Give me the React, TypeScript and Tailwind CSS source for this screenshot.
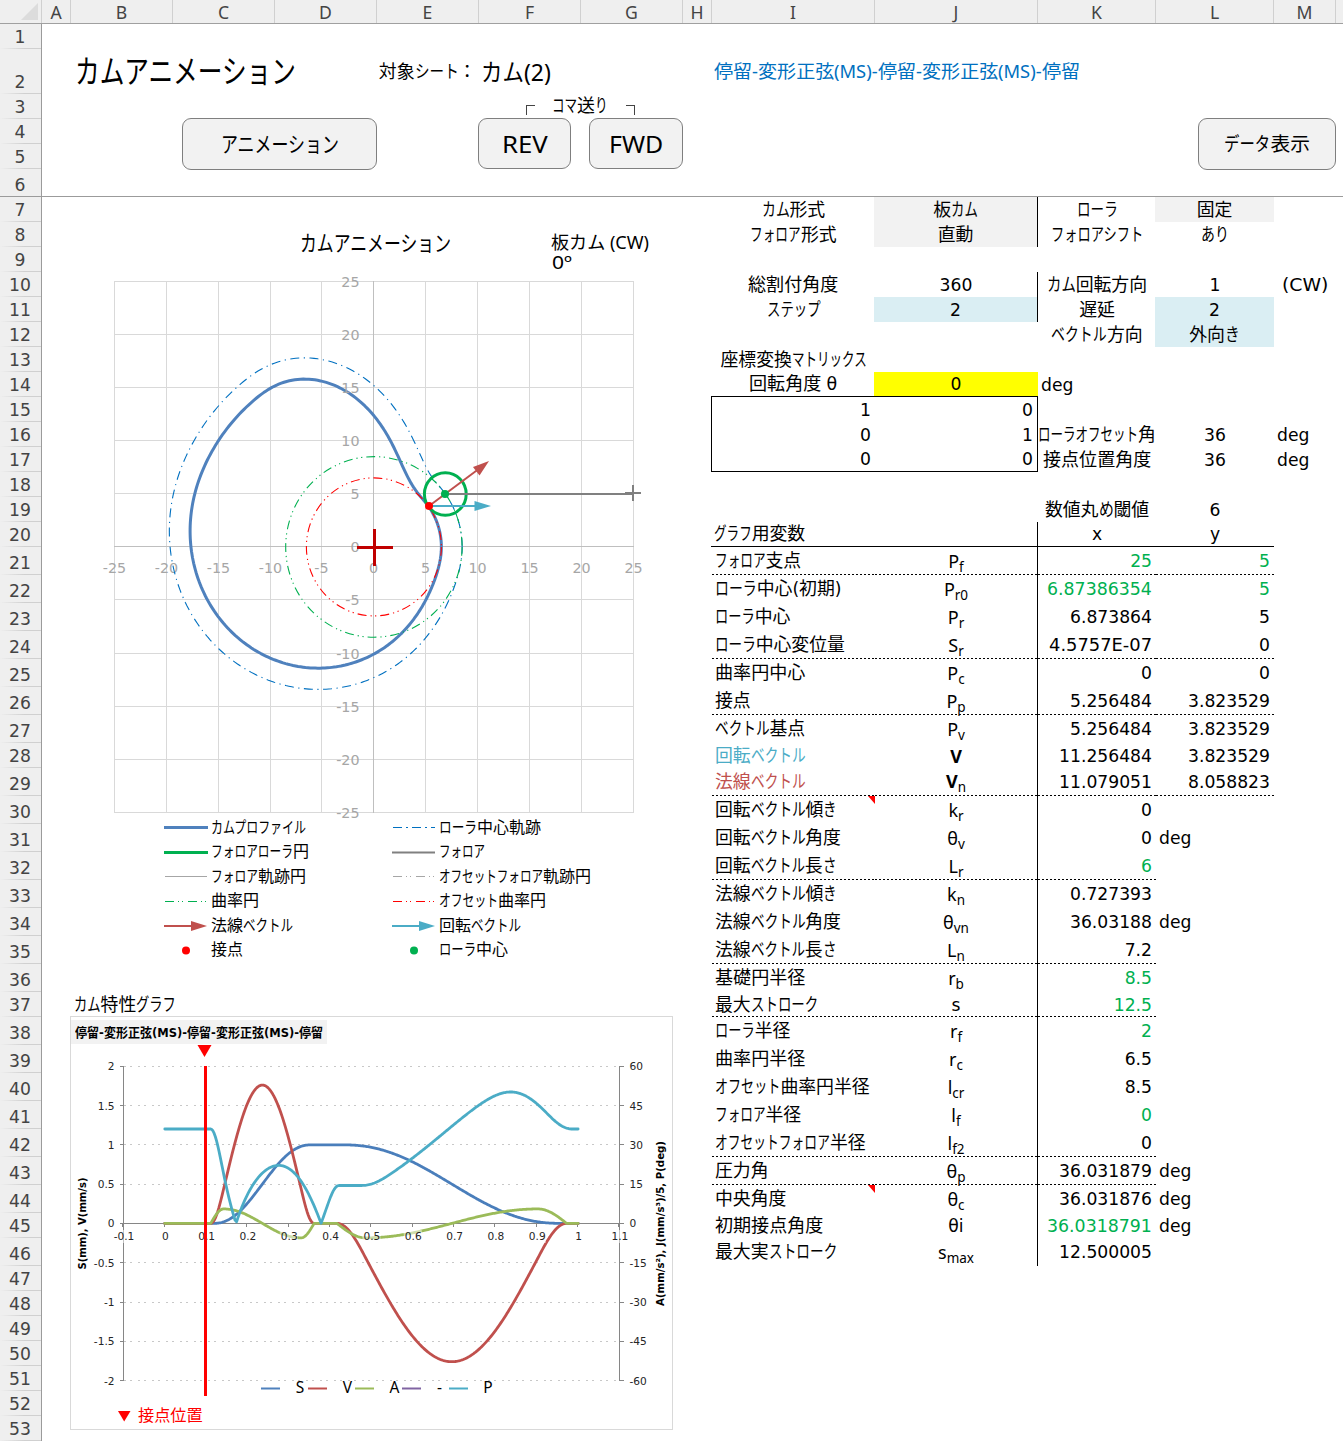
import { useLayoutEffect, useRef, type ReactNode } from "react";

/* ---------- text fitting: kana are set narrower than kanji ---------- */

const KANA = /[\u3040-\u30ff]/;
const CJK = /[\u3000-\u9fff\uff00-\uffef]/;

function kind(c: string) {
  return KANA.test(c) ? "kana" : CJK.test(c) ? "kanji" : "latin";
}

function runsOf(text: string) {
  const runs: { k: string; s: string }[] = [];
  for (const c of text) {
    const k = kind(c);
    const last = runs[runs.length - 1];
    if (last && last.k === k) last.s += c;
    else runs.push({ k, s: c });
  }
  return runs;
}

function T({ t, w, className = "" }: { t: string; w?: number; className?: string }) {
  const ref = useRef<HTMLSpanElement>(null);
  useLayoutEffect(() => {
    const parts = Array.from(ref.current!.children) as HTMLElement[];
    const kana = parts.filter((p) => p.dataset.k === "kana");
    const width = (l: HTMLElement[]) => l.reduce((a, p) => a + p.offsetWidth, 0);
    const squeeze = (l: HTMLElement[], s: number) =>
      l.forEach((p) => {
        p.style.transform = `scaleX(${s})`;
        p.style.marginRight = `${(s - 1) * p.offsetWidth}px`;
      });
    const all = width(parts);
    const kw = width(kana);
    if (w === undefined) squeeze(kana, 0.74);
    else if (kana.length) squeeze(kana, (w - (all - kw)) / kw);
    else squeeze(parts, w / all);
  }, [t, w]);
  return (
    <span ref={ref} className={"inline-block shrink-0 whitespace-pre " + className}>
      {runsOf(t).map((r, i) => (
        <span
          key={i}
          data-k={r.k}
          className={"inline-block origin-left " + (r.k === "latin" ? "" : "text-[1.04em]")}
        >
          {r.s}
        </span>
      ))}
    </span>
  );
}

/* ---------- sheet metrics ---------- */

const LIGHT = "font-['Noto_Sans','Noto_Sans_CJK_JP',sans-serif]";

const COLS: [string, number][] = [
  ["A", 29], ["B", 102], ["C", 102], ["D", 102], ["E", 102], ["F", 102], ["G", 102],
  ["H", 29], ["I", 163], ["J", 163], ["K", 118], ["L", 118], ["M", 62],
];

const TALL = new Set([6, 21, 22, 23, 24, 25, 26, 27, 29, 30, 31, 32, 33, 34, 35, 36, 38, 39, 40, 41, 42, 43, 44, 46]);
const rowHeight = (n: number) => (n === 2 ? 45 : TALL.has(n) ? 28 : 25);
const ROWS = Array.from({ length: 53 }, (_, i) => i + 1);

/* ---------- parameter table ---------- */

type Cell = { t?: string; w?: number; n?: ReactNode; c?: string };
type Row = { I?: Cell; J?: Cell; K?: Cell; L?: Cell; M?: Cell; v?: boolean; dot?: "K" | "L"; note?: boolean };

const C = "justify-center";
const R = "justify-end pr-1";
const L = "pl-[3px]";
const G = " text-[#00b050]";
const GREY = " -ml-px bg-[#f2f2f2]";
const SKY = " -ml-px bg-[#daeef3]";

const sym = (a: string, b?: string, bold = false) => (
  <span className={"relative top-px text-[18px] " + LIGHT}>
    <span className={bold ? "font-bold" : ""}>{a}</span>
    {b && <span className="relative top-[4px] text-[13.5px]">{b}</span>}
  </span>
);
const S = (a: string, b?: string, bold = false): Cell => ({ n: sym(a, b, bold), c: C });
const lab = (t: string, w?: number, x = ""): Cell => ({ t, w, c: L + x });
const num = (t: string, w?: number, x = ""): Cell => ({ t, w, c: R + x });
const mid = (t: string, w?: number, x = ""): Cell => ({ t, w, c: C + x });

const TABLE: Record<number, Row> = {
  7: { I: mid("カム形式", 64), J: mid("板カム", 45, GREY), K: mid("ローラ", 41), L: mid("固定", 36, GREY), v: true },
  8: { I: mid("フォロア形式", 87), J: mid("直動", 36, GREY), K: mid("フォロアシフト", 92), L: mid("あり", 28), v: true },
  10: { I: mid("総割付角度", 90), J: mid("360"), K: mid("カム回転方向", 101), L: mid("1"), M: mid("(CW)", 46), v: true },
  11: { I: mid("ステップ", 54), J: mid("2", undefined, SKY), K: mid("遅延", 36), L: mid("2", undefined, SKY), v: true },
  12: { K: mid("ベクトル方向", 92), L: mid("外向き", 51, SKY) },
  13: { I: mid("座標変換マトリックス", 147) },
  14: {
    I: { t: "回転角度 θ", w: 89, c: C + " -ml-px border-b border-black" },
    J: mid("0", undefined, " -ml-px bg-[#ffff00] border-b border-black"),
    K: lab("deg"),
  },
  15: { I: num("1", undefined, " -ml-px border-l border-black"), J: num("0"), v: true },
  16: {
    I: num("0", undefined, " -ml-px border-l border-black"),
    J: num("1"),
    K: mid("ローラオフセット角", 118),
    L: mid("36"),
    M: lab("deg"),
    v: true,
  },
  17: {
    I: num("0", undefined, " -ml-px border-l border-b border-black"),
    J: num("0", undefined, " border-b"),
    K: mid("接点位置角度", 108),
    L: mid("36"),
    M: lab("deg"),
    v: true,
  },
  19: { K: mid("数値丸め閾値", 105), L: mid("6") },
  20: {
    I: lab("グラフ用変数", 92, " -ml-px border-b border-black"),
    J: { c: "border-b" },
    K: mid("x", undefined, " border-b border-black"),
    L: mid("y", undefined, " border-b border-black"),
    v: true,
  },
  21: { I: lab("フォロア支点", 87), J: S("P", "f"), K: num("25", undefined, G), L: num("5", undefined, G), v: true, dot: "L" },
  22: { I: lab("ローラ中心(初期)", 128), J: S("P", "r0"), K: num("6.87386354", 105, G), L: num("5", undefined, G), v: true },
  23: { I: lab("ローラ中心", 76), J: S("P", "r"), K: num("6.873864"), L: num("5"), v: true },
  24: { I: lab("ローラ中心変位量", 130), J: S("S", "r"), K: num("4.5757E-07", 103), L: num("0"), v: true, dot: "L" },
  25: { I: lab("曲率円中心", 90), J: S("P", "c"), K: num("0"), L: num("0"), v: true },
  26: { I: lab("接点", 36), J: S("P", "p"), K: num("5.256484"), L: num("3.823529"), v: true, dot: "L" },
  27: { I: lab("ベクトル基点", 91), J: S("P", "v"), K: num("5.256484"), L: num("3.823529"), v: true },
  28: { I: lab("回転ベクトル", 91, " text-[#4bacc6]"), J: { n: <b className={"text-[18px] " + LIGHT}>V</b>, c: C }, K: num("11.256484"), L: num("3.823529"), v: true },
  29: { I: lab("法線ベクトル", 91, " text-[#c0504d]"), J: { n: <span className="relative -top-px">{sym("V", "n", true)}</span>, c: C }, K: num("11.079051"), L: num("8.058823"), v: true, dot: "L" },
  30: { I: lab("回転ベクトル傾き", 123), J: S("k", "r"), K: num("0"), v: true, note: true },
  31: { I: lab("回転ベクトル角度", 127), J: S("θ", "v"), K: num("0"), L: lab("deg"), v: true },
  32: { I: lab("回転ベクトル長さ", 122), J: S("L", "r"), K: num("6", undefined, G), v: true, dot: "K" },
  33: { I: lab("法線ベクトル傾き", 123), J: S("k", "n"), K: num("0.727393"), v: true },
  34: { I: lab("法線ベクトル角度", 127), J: S("θ", "vn"), K: num("36.03188"), L: lab("deg"), v: true },
  35: { I: lab("法線ベクトル長さ", 122), J: S("L", "n"), K: num("7.2"), v: true, dot: "K" },
  36: { I: lab("基礎円半径", 90), J: S("r", "b"), K: num("8.5", undefined, G), v: true },
  37: { I: lab("最大ストローク", 103), J: { t: "s", c: C }, K: num("12.5", undefined, G), v: true, dot: "K" },
  38: { I: lab("ローラ半径", 76), J: S("r", "f"), K: num("2", undefined, G), v: true },
  39: { I: lab("曲率円半径", 90), J: S("r", "c"), K: num("6.5"), v: true },
  40: { I: lab("オフセット曲率円半径", 154), J: S("l", "cr"), K: num("8.5"), v: true },
  41: { I: lab("フォロア半径", 87), J: S("l", "f"), K: num("0", undefined, G), v: true },
  42: { I: lab("オフセットフォロア半径", 151), J: S("l", "f2"), K: num("0"), v: true, dot: "K" },
  43: { I: lab("圧力角", 54), J: S("θ", "p"), K: num("36.031879"), L: lab("deg"), v: true, dot: "K" },
  44: { I: lab("中央角度", 72), J: S("θ", "c"), K: num("36.031876"), L: lab("deg"), v: true, note: true },
  45: { I: lab("初期接点角度", 108), J: { t: "θi", c: C }, K: num("36.0318791", 105, G), L: lab("deg"), v: true },
  46: { I: lab("最大実ストローク", 122), J: S("s", "max"), K: num("12.500005"), v: true },
};

const DOTS =
  " bg-[repeating-linear-gradient(90deg,#000_0_2px,transparent_2px_4px)] bg-[length:100%_1px] bg-no-repeat bg-bottom";

function TableCell({ cell, extra = "" }: { cell?: Cell; extra?: string }) {
  return (
    <div className={"relative flex items-center " + (cell?.c ?? "") + extra}>
      {cell?.t !== undefined ? <T t={cell.t} w={cell.w} /> : cell?.n}
    </div>
  );
}

function ParameterTable() {
  return (
    <div className="flex w-[631px] flex-col">
      {ROWS.filter((n) => n > 6).map((n) => {
        const r = TABLE[n] ?? {};
        const d = r.dot ? DOTS : "";
        return (
          <div
            key={n}
            className={
              "grid grid-cols-[163px_163px_118px_118px_62px] " +
              (TALL.has(n) ? "h-[28px]" : "h-[25px]")
            }
          >
            <div className="relative grid">
              <TableCell cell={r.I} extra={d} />
              {r.note && (
                <i className="absolute top-0 right-0 h-[8px] w-[7px] bg-[#ff0000] [clip-path:polygon(0_0,100%_0,100%_100%)]" />
              )}
            </div>
            <TableCell cell={r.J} extra={d + (r.v ? " border-r border-r-black border-b-black" : "")} />
            <TableCell cell={r.K} extra={d} />
            <TableCell cell={r.L} extra={r.dot === "L" ? d : ""} />
            <TableCell cell={r.M} />
          </div>
        );
      })}
    </div>
  );
}

/* ---------- modified sine motion ---------- */

const Q = 4 + Math.PI;
function ms(t: number): [number, number, number] {
  const pi = Math.PI;
  const k = pi / Q;
  const am = (4 * pi * pi) / Q;
  if (t < 1 / 8) return [k * t - Math.sin(4 * pi * t) / (4 * Q), k * (1 - Math.cos(4 * pi * t)), am * Math.sin(4 * pi * t)];
  if (t < 7 / 8) {
    const a = (pi * (1 + 4 * t)) / 3;
    return [(2 + pi * t - 2.25 * Math.sin(a)) / Q, k * (1 - 3 * Math.cos(a)), am * Math.sin(a)];
  }
  return [(4 + pi * t - 0.25 * Math.sin(4 * pi * t)) / Q, k * (1 - Math.cos(4 * pi * t)), am * Math.sin(4 * pi * t)];
}

function motion(deg: number, fall = 200): [number, number, number] {
  if (deg <= 40) return [0, 0, 0];
  if (deg < 130) return ms((deg - 40) / 90);
  if (deg <= 150) return [1, 0, 0];
  if (deg < 150 + fall) {
    const [s, v, a] = ms((deg - 150) / fall);
    return [1 - s, -v, -a];
  }
  return [0, 0, 0];
}

const radius = (deg: number) => Math.hypot(6.873864 + 12.5 * motion(deg, 204.5)[0], 5);
const rad = (d: number) => (d * Math.PI) / 180;
const slope = (d: number) => (radius(d + 0.5) - radius(d - 0.5)) / rad(1);
const toPath = (pts: number[][]) => "M" + pts.map((p) => `${p[0].toFixed(2)} ${p[1].toFixed(2)}`).join("L");
const DEG = Array.from({ length: 361 }, (_, i) => i);

/* ---------- cam chart ---------- */

const cx = (x: number) => 373.9 + x * 10.38;
const cy = (y: number) => 546.9 - y * 10.62;
const GX = [114.5, 166.5, 218.5, 270.5, 321.5, 373.5, 425.5, 477.5, 529.5, 581.5, 633.5];
const GY = [281.5, 334.5, 387.5, 440.5, 493.5, 546.5, 599.5, 653.5, 706.5, 759.5, 812.5];

const pitchPath = toPath(DEG.map((d) => [cx(radius(d) * Math.cos(rad(d))), cy(radius(d) * Math.sin(rad(d)))])) + "Z";
const profilePath =
  toPath(
    DEG.map((d) => {
      const r = radius(d);
      const a = rad(d);
      const n = a - Math.atan2(slope(d), r);
      return [cx(r * Math.cos(a) - 2 * Math.cos(n)), cy(r * Math.sin(a) - 2 * Math.sin(n))];
    })
  ) + "Z";

function CamChart() {
  return (
    <svg viewBox="70 222 612 593" className="block h-[593px] w-[612px] overflow-visible">
      <g fill="#000">
        <text x="300" y="251" fontSize="22" textLength="151" lengthAdjust="spacingAndGlyphs">カムアニメーション</text>
        <g className={LIGHT}>
          <text x="551" y="249" fontSize="18" textLength="98" lengthAdjust="spacingAndGlyphs">板カム (CW)</text>
          <text x="552" y="269" fontSize="18" textLength="20" lengthAdjust="spacingAndGlyphs">0º</text>
        </g>
      </g>
      <g stroke="#d9d9d9" strokeWidth="1">
        {GX.map((x) => <path key={x} d={`M${x} 281V813`} />)}
        {GY.map((y) => <path key={y} d={`M114 ${y}H634`} />)}
        <path d="M373.5 281V813M114 546.5H634" stroke="#bfbfbf" />
      </g>
      <path d={profilePath} fill="none" stroke="#4f81bd" strokeWidth="3" strokeLinejoin="round" />
      <g fill="#a6a6a6" fontSize="14.3">
        {GY.map((y, i) => <text key={y} x="359.5" y={y + 5.5} textAnchor="end">{25 - i * 5}</text>)}
        {GX.map((x, i) => <text key={x} x={x} y="573" textAnchor="middle">{i * 5 - 25}</text>)}
      </g>
      <g fill="none" strokeWidth="1.1">
        <path d={pitchPath} stroke="#0070c0" strokeDasharray="9 4.5 1.2 4.5" />
        <ellipse cx={cx(0)} cy={cy(0)} rx={88.2} ry={90.3} stroke="#00b050" strokeDasharray="9 4 1.2 3.5 1.2 4" />
        <ellipse cx={cx(0)} cy={cy(0)} rx={67.5} ry={69} stroke="#ff0000" strokeDasharray="9 4 1.2 3.5 1.2 4" />
      </g>
      <ellipse cx={445.3} cy={494} rx={20.9} ry={21.3} fill="none" stroke="#00b050" strokeWidth="3" />
      <path d="M445 494H634" stroke="#808080" strokeWidth="2" />
      <path d="M625 493H641M633 485V501" stroke="#808080" strokeWidth="2" />
      <path d="M429 506L478 469.500" stroke="#c0504d" strokeWidth="2" />
      <path d="M489 461L473 467L479.500 475.500Z" fill="#c0504d" />
      <path d="M429 506H477" stroke="#4bacc6" strokeWidth="2" />
      <path d="M491 506L474.500 501V511Z" fill="#4bacc6" />
      <circle cx="445" cy="494" r="4" fill="#00b050" />
      <circle cx="429" cy="506" r="4" fill="#ff0000" />
      <path d="M357 547.500H393M374.500 529V566" stroke="#c00000" strokeWidth="3" />
    </svg>
  );
}

const line = (stroke: string, dash?: string) => (
  <path d="M1 12.500H43" stroke={stroke} strokeWidth="1" strokeDasharray={dash} shapeRendering="crispEdges" />
);
const arrow = (c: string) => (
  <>
    <path d="M0 13H28" stroke={c} strokeWidth="2" />
    <path d="M43 13L27 8V18Z" fill={c} />
  </>
);
const LEGEND: [ReactNode, string, number][] = [
  [<path d="M0 12.500H44" stroke="#4f81bd" strokeWidth="3" />, "カムプロファイル", 95],
  [line("#0070c0", "9 4 2 4"), "ローラ中心軌跡", 102],
  [<path d="M0 12.500H44" stroke="#00b050" strokeWidth="3" />, "フォロアローラ円", 98],
  [<path d="M0 12.500H43" stroke="#808080" strokeWidth="2" />, "フォロア", 46],
  [line("#a6a6a6"), "フォロア軌跡円", 95],
  [line("#a6a6a6", "9 4 1 3 1 5"), "オフセットフォロア軌跡円", 152],
  [line("#00b050", "9 4 1 3 1 5"), "曲率円", 48],
  [line("#ff0000", "9 4 1 3 1 5"), "オフセット曲率円", 107],
  [arrow("#c0504d"), "法線ベクトル", 82],
  [arrow("#4bacc6"), "回転ベクトル", 82],
  [<circle cx="22" cy="12.500" r="4" fill="#ff0000" />, "接点", 32],
  [<circle cx="22" cy="12.500" r="4" fill="#00b050" />, "ローラ中心", 69],
];

function CamLegend() {
  return (
    <div className="ml-[94px] grid h-[147px] w-[456px] grid-cols-2 grid-rows-6 text-[15.4px]">
      {LEGEND.map(([swatch, label, w]) => (
        <div key={label} className="flex items-center gap-[3px]">
          <svg viewBox="0 0 44 24" className="h-6 w-[44px] shrink-0">{swatch}</svg>
          <T t={label} w={w} className="pt-px" />
        </div>
      ))}
    </div>
  );
}

/* ---------- characteristic chart ---------- */

const px = (x: number) => 164.8 + x * 413.3;
const py = (y: number) => 1223.4 - y * 78.6;
const sPath = toPath(DEG.map((d) => [px(d / 360), py(motion(d)[0])]));
const vPath = toPath(DEG.map((d) => [px(d / 360), py(motion(d)[1])]));
const aPath = toPath(DEG.map((d) => [px(d / 360), py(motion(d)[2] / 30)]));
const pPath = toPath(
  DEG.map((d) => {
    const r = radius(d);
    const lead = Math.asin(5 / r);
    const p = Math.abs(lead - Math.atan2(slope(d), r));
    return [px(Math.min(1, (d + 36.03 - (lead * 180) / Math.PI) / 360)), py((p * 180) / Math.PI / 30)];
  })
);
const YS = [2, 1.5, 1, 0.5, 0, -0.5, -1, -1.5, -2];
const XS = Array.from({ length: 13 }, (_, i) => i - 1);
const KEYS: [string, string, number, number][] = [
  ["S", "#4f81bd", 261, 300],
  ["V", "#c0504d", 308, 347.5],
  ["A", "#9bbb59", 355, 394.5],
  ["-", "#8064a2", 402, 439.5],
  ["P", "#4bacc6", 449, 488],
];

function MotionChart() {
  return (
    <svg viewBox="71 1044 601 385" className="block h-[385px] w-[601px] overflow-visible">
      <g stroke="#c8c8c8" strokeDasharray="2 4 2 6">
        {YS.filter((y) => y !== 0).map((y) => <path key={y} d={`M124 ${Math.floor(py(y)) + 0.5}H620`} />)}
      </g>
      <g stroke="#868686">
        <path d="M123.500 1066V1381M619.500 1066V1381M123 1223.500H620" />
        {YS.map((y) => <path key={y} d={`M120 ${Math.floor(py(y)) + 0.5}H124M619 ${Math.floor(py(y)) + 0.5}H624`} />)}
        {XS.map((x) => <path key={x} d={`M${Math.round(px(x / 10)) - 0.5} 1223V1227`} />)}
      </g>
      <g fill="none" strokeWidth="2.8" strokeLinejoin="round" strokeLinecap="round">
        <path d={sPath} stroke="#4a7ebb" />
        <path d={vPath} stroke="#c0504d" />
        <path d={aPath} stroke="#9bbb59" />
        <path d={pPath} stroke="#4bacc6" />
      </g>
      <g fontSize="10.6" fill="#262626">
        {YS.map((y) => <text key={y} x="114.500" y={py(y) + 4} textAnchor="end">{y}</text>)}
        {YS.map((y) => <text key={y} x="629.500" y={py(y) + 4}>{y * 30}</text>)}
        {XS.map((x) => (
          <g key={x}>
            <rect x={px(x / 10) - 9} y="1230" width="18" height="13" fill="#fff" fillOpacity="0.5" />
            <text x={px(x / 10) + 0.5} y="1240" textAnchor="middle">{x / 10}</text>
          </g>
        ))}
      </g>
      <g fontSize="10.8" fontWeight="bold" fill="#000">
        <text transform="translate(85.500 1269.500) rotate(-90)" textLength="92" lengthAdjust="spacingAndGlyphs">S(mm), V(mm/s)</text>
        <text transform="translate(663.500 1306) rotate(-90)" textLength="165" lengthAdjust="spacingAndGlyphs">A(mm/s²), J(mm/s³)/5, P(deg)</text>
      </g>
      <path d="M205.500 1066V1396" stroke="#ff0000" strokeWidth="3" />
      <path d="M197.500 1045H211.500L204.500 1057Z" fill="#ff0000" />
      {KEYS.map(([k, c, x, tx]) => (
        <g key={k}>
          <path d={`M${x} 1388.500H${x + 19}`} stroke={c} strokeWidth="2" />
          <text x={tx} y="1393" fontSize="15.500" textAnchor="middle" className={LIGHT}>{k}</text>
        </g>
      ))}
      <path d="M118 1411H130.500L124.200 1421.500Z" fill="#ff0000" />
      <text x="138" y="1421" fontSize="16.200" fill="#ff0000">接点位置</text>
    </svg>
  );
}

/* ---------- frame ---------- */

function SheetButton({ className, children }: { className: string; children: ReactNode }) {
  return (
    <button className={"flex items-center justify-center rounded-[9px] border border-[#7f7f7f] bg-[#f2f2f2] pt-px " + className}>
      {children}
    </button>
  );
}

function TopPane() {
  return (
    <div className="flex h-[173px] flex-col border-b border-[#9b9b9b] pt-[25px]">
      <div className="flex h-[45px] items-center">
        <T t="カムアニメーション" w={221} className="ml-[33px] text-[31px]" />
        <T t="対象シート：" w={98} className="ml-[83px]" />
        <T t="カム(2)" w={70} className={"ml-[5px] text-[23px] " + LIGHT} />
        <T t="停留-変形正弦(MS)-停留-変形正弦(MS)-停留" w={369} className={"ml-[163px] text-[#0070c0] " + LIGHT} />
      </div>
      <div className="flex h-[24px] items-center">
        <i className="mt-2 ml-[484px] h-[10px] w-[9px] border-t border-l border-[#444]" />
        <T t="コマ送り" w={56} className="ml-[17px]" />
        <i className="mt-2 ml-[18px] h-[10px] w-[9px] border-t border-r border-[#444]" />
      </div>
      <div className="flex items-start">
        <SheetButton className="ml-[140px] h-[52px] w-[195px]">
          <T t="アニメーション" w={118} className="text-[21px]" />
        </SheetButton>
        <SheetButton className="ml-[101px] h-[51px] w-[93px]">
          <T t="REV" w={46} className={"text-[23.5px] " + LIGHT} />
        </SheetButton>
        <SheetButton className="ml-[18px] h-[51px] w-[94px]">
          <T t="FWD" w={54} className={"text-[23.5px] " + LIGHT} />
        </SheetButton>
        <SheetButton className="ml-[515px] h-[52px] w-[138px]">
          <T t="データ表示" w={86} className="text-[19px]" />
        </SheetButton>
      </div>
    </div>
  );
}

export default function App() {
  return (
    <div className="flex h-[1442px] w-[1343px] flex-col overflow-hidden bg-white font-['DejaVu_Sans','Noto_Sans_CJK_JP',sans-serif] text-[17.2px] leading-[20px] text-black">
      <div className={"flex h-6 shrink-0 border-b border-[#a0a0a0] bg-[#efefef] text-[17.6px] text-[#444] " + LIGHT}>
        <div className="flex w-[42px] justify-end border-r border-[#d0d0d0] pt-[3px] pr-[3px]">
          <i className="h-[17px] w-[17px] bg-[#dcdcdc] [clip-path:polygon(100%_0,100%_100%,0_100%)]" />
        </div>
        {COLS.map(([c, w]) => (
          <div
            key={c}
            className="flex items-center justify-center border-r border-[#d0d0d0]"
            style={{ width: w }}
          >
            {c}
          </div>
        ))}
      </div>
      <div className="flex">
        <div className="w-[42px] shrink-0 border-r border-[#9b9b9b] bg-[#efefef] text-[#444]">
          {ROWS.map((n) => (
            <div
              key={n}
              className={
                "flex items-end justify-center bg-[length:100%_1px] bg-bottom bg-no-repeat pb-[2px] pr-px " +
                (n === 6
                  ? "bg-[linear-gradient(#9b9b9b,#9b9b9b)]"
                  : "bg-[linear-gradient(90deg,transparent,#d0d0d0_60%)]")
              }
              style={{ height: rowHeight(n) }}
            >
              {n}
            </div>
          ))}
        </div>
        <div className="w-[1301px]">
          <TopPane />
          <div className="flex">
            <div className="flex w-[670px] flex-col pt-[25px] pl-[28px]">
              <CamChart />
              <CamLegend />
              <div className="flex h-[54px] items-end pb-px pl-1">
                <T t="カム特性グラフ" w={103} />
              </div>
              <div className="h-[414px] w-[603px] border border-[#d9d9d9] pt-[3px]">
                <div className="flex h-6 w-[256px] items-center bg-[#f2f2f2] pt-px pl-1 text-[12.5px] font-bold">
                  <T t="停留-変形正弦(MS)-停留-変形正弦(MS)-停留" w={247} />
                </div>
                <MotionChart />
              </div>
            </div>
            <ParameterTable />
          </div>
        </div>
      </div>
    </div>
  );
}
